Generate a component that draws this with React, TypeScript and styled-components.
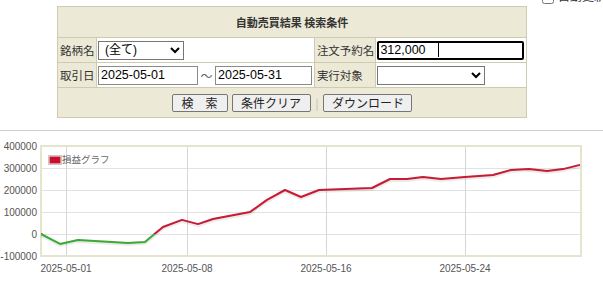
import styled, { createGlobalStyle } from "styled-components";

const GlobalStyle = createGlobalStyle`
  body {
    margin: 0;
    background: #fff;
    font-family: "Noto Sans CJK JP", "Noto Sans", sans-serif;
    color: #333;
    overflow: hidden;
  }
`;

const beige = "#ece9d6";
const rule = "#cfcbb2";

const TopBar = styled.div`
  display: flex;
  align-items: flex-end;
  height: 4px;
  padding-left: 540px;
  overflow: visible;
  white-space: nowrap;
  font-size: 12px;
  input {
    margin: 0 4px 0 2px;
    width: 12px;
    height: 12px;
  }
`;

const Panel = styled.table`
  margin: 2px 0 0 57px;
  width: 470px;
  border-collapse: collapse;
  border: 1px solid ${rule};
  font-size: 11.5px;
  td,
  th {
    border: 1px solid ${rule};
    padding: 0;
  }
`;

const HeaderCell = styled.th`
  height: 30px;
  background: ${beige};
  font-size: 11px;
  font-weight: bold;
  color: #333;
`;

const LabelCell = styled.td<{ $w: number }>`
  width: ${(p) => p.$w}px;
  height: 24px;
  padding: 0 1px 0 2px !important;
  background: ${beige};
  white-space: nowrap;
  color: #333;
`;

const FieldCell = styled.td`
  background: #fff;
  padding: 0 1px !important;
  white-space: nowrap;
`;

const ActionCell = styled.td`
  height: 29px;
  background: ${beige};
  text-align: center;
`;

const Select = styled.select<{ $w: number }>`
  width: ${(p) => p.$w}px;
  height: 19px;
  margin: 0;
  padding: 0 2px;
  font: 12px "Liberation Sans", "Noto Sans CJK JP", sans-serif;
  color: #000;
  border: 1px solid #767676;
  border-radius: 0;
  background: #fff;
  vertical-align: middle;
`;

const TextBox = styled.input<{ $w: number }>`
  box-sizing: border-box;
  width: ${(p) => p.$w}px;
  height: 19px;
  margin: 0;
  padding: 0 2px;
  font: 12.5px "Liberation Sans", sans-serif;
  color: #000;
  border: 1px solid #8a8a8a;
  border-radius: 0;
  vertical-align: middle;
  outline: none;
`;

const FocusBox = styled.span`
  position: relative;
  display: inline-block;
  vertical-align: middle;
  input {
    width: 147px;
    border: 2px solid #000;
    border-radius: 2px;
    padding-left: 1px;
  }
  &::after {
    content: "";
    position: absolute;
    left: 61px;
    top: 3px;
    bottom: 3px;
    width: 1px;
    background: #000;
  }
`;

const Tilde = styled.span`
  display: inline-block;
  width: 17px;
  text-align: center;
  color: #666;
  font-size: 12px;
  vertical-align: middle;
`;

const Button = styled.button<{ $w: number }>`
  width: ${(p) => p.$w}px;
  height: 18px;
  margin: 0 2px;
  padding: 0;
  font: 12px "Noto Sans CJK JP", sans-serif;
  line-height: 16px;
  color: #222;
  background: #efefef;
  border: 1px solid #767676;
  border-radius: 2px;
  vertical-align: middle;
`;

const Sep = styled.span`
  display: inline-block;
  margin: 0 3px;
  color: #bbb;
  font-size: 11px;
  vertical-align: middle;
`;

const Divider = styled.hr`
  margin: 12px 0 0;
  border: 0;
  border-top: 1px solid #cfcfcf;
`;

const ChartBox = styled.div`
  height: 150px;
  svg {
    display: block;
    font-family: "Liberation Sans", sans-serif;
  }
`;

// plot frame in svg pixels
const L = 41;
const R = 581;
const T = 15;
const B = 125;
const yOf = (v: number) => T + ((400000 - v) / 500000) * (B - T);

const series: [number, number][] = [
  [41, 0], [60, -45000], [78, -27000], [128, -41000], [145, -36000],
  [163, 32000], [182, 64000], [198, 45000], [213, 68000], [250, 100000],
  [267, 155000], [285, 200000], [301, 168000], [319, 200000], [372, 209000],
  [390, 250000], [407, 250000], [423, 259000], [441, 250000], [465, 259000],
  [493, 268000], [511, 291000], [529, 295000], [547, 286000], [563, 295000],
  [580, 314000],
];

const ticksY = [400000, 300000, 200000, 100000, 0, -100000];
const ticksX: [number, string][] = [
  [66, "2025-05-01"],
  [187, "2025-05-08"],
  [326, "2025-05-16"],
  [465, "2025-05-24"],
];

const ProfitChart = () => {
  const d = series.map(([x, v], i) => `${i ? "L" : "M"}${x} ${yOf(v).toFixed(1)}`).join(" ");
  const zero = yOf(0);
  return (
    <ChartBox>
      <svg width={603} height={150} viewBox="0 0 603 150">
        <defs>
          <clipPath id="above">
            <rect x={L} y={0} width={R - L} height={zero} />
          </clipPath>
          <clipPath id="below">
            <rect x={L} y={zero} width={R - L} height={150} />
          </clipPath>
        </defs>
        {ticksY.slice(1, 5).map((v) => (
          <line key={v} x1={L} x2={R} y1={yOf(v) + 0.5} y2={yOf(v) + 0.5} stroke="#e2e2e2" />
        ))}
        {ticksX.map(([x]) => (
          <line key={x} x1={x + 0.5} x2={x + 0.5} y1={T} y2={B} stroke="#d6d6d6" />
        ))}
        <rect x={L} y={T} width={R - L} height={B - T} fill="none" stroke="#e6e4cc" strokeWidth={2} />
        {ticksY.map((v) => (
          <text key={v} x={37} y={yOf(v) + 4} fontSize={10} fill="#555" textAnchor="end">
            {v}
          </text>
        ))}
        {ticksX.map(([x, s]) => (
          <text key={s} x={x} y={141} fontSize={10} fill="#555" textAnchor="middle">
            {s}
          </text>
        ))}
        <path d={d} fill="none" stroke="#000" strokeOpacity={0.08} strokeWidth={4} transform="translate(0 1)" />
        <path d={d} fill="none" stroke="#c81a32" strokeWidth={2} strokeLinejoin="round" clipPath="url(#above)" />
        <path d={d} fill="none" stroke="#3aaa35" strokeWidth={2} strokeLinejoin="round" clipPath="url(#below)" />
        <rect x={48.5} y={24.5} width={13} height={9} fill="#fff" stroke="#c8c8c8" />
        <rect x={49.5} y={25.5} width={11} height={7} fill="#c8102e" />
        <text x={62} y={32} fontSize={9.5} fill="#666" fontFamily='"Noto Sans CJK JP", sans-serif'>
          損益グラフ
        </text>
      </svg>
    </ChartBox>
  );
};

const App = () => {
  return (
    <>
      <GlobalStyle />
      <TopBar>
        <input type="checkbox" />
        <span>自動更新</span>
      </TopBar>
      <Panel>
        <tbody>
          <tr>
            <HeaderCell colSpan={4}>自動売買結果 検索条件</HeaderCell>
          </tr>
          <tr>
            <LabelCell $w={35}>銘柄名</LabelCell>
            <FieldCell>
              <Select $w={86} defaultValue="all">
                <option value="all">(全て)</option>
              </Select>
            </FieldCell>
            <LabelCell $w={57}>注文予約名</LabelCell>
            <FieldCell>
              <FocusBox>
                <TextBox $w={147} defaultValue="312,000" />
              </FocusBox>
            </FieldCell>
          </tr>
          <tr>
            <LabelCell $w={35}>取引日</LabelCell>
            <FieldCell>
              <TextBox $w={100} defaultValue="2025-05-01" />
              <Tilde>～</Tilde>
              <TextBox $w={97} defaultValue="2025-05-31" />
            </FieldCell>
            <LabelCell $w={57}>実行対象</LabelCell>
            <FieldCell>
              <Select $w={108} defaultValue="">
                <option value=""></option>
              </Select>
            </FieldCell>
          </tr>
          <tr>
            <ActionCell colSpan={4}>
              <Button $w={56}>検　索</Button>
              <Button $w={79}>条件クリア</Button>
              <Sep>|</Sep>
              <Button $w={89}>ダウンロード</Button>
            </ActionCell>
          </tr>
        </tbody>
      </Panel>
      <Divider />
      <ProfitChart />
    </>
  );
};

export default App;
